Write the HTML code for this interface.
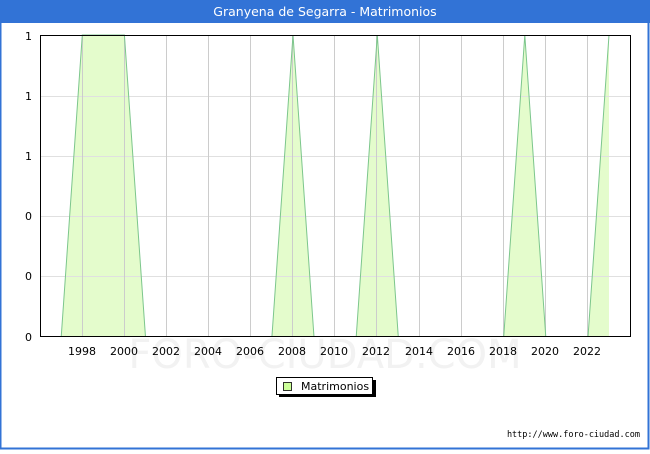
<!DOCTYPE html>
<html><head><meta charset="utf-8"><style>
body{margin:0;width:650px;height:450px;overflow:hidden;background:#fff;font-family:"DejaVu Sans","Liberation Sans",sans-serif;}
</style></head><body>
<svg width="650" height="450" xmlns="http://www.w3.org/2000/svg" font-family="DejaVu Sans, Liberation Sans, sans-serif">
<rect x="0.5" y="0.5" width="648" height="448" fill="#fff" stroke="#3273d6" stroke-width="2"/>
<rect x="0" y="0" width="650" height="23" fill="#3273d6"/>
<text x="325" y="16" text-anchor="middle" fill="#fff" font-size="12.5">Granyena de Segarra - Matrimonios</text>
<text x="325" y="368" text-anchor="middle" fill="#f2f2f2" font-size="40">FORO-CIUDAD.COM</text>
<path d="M61.2 337 L82.3 35 L124.4 35 L145.5 337 L271.9 337 L293 35 L314 337 L356.2 337 L377.3 35 L398.3 337 L503.7 337 L524.8 35 L545.8 337 L588 337 L609 35 L609 337 Z" fill="#e4fccc" stroke="none"/>
<g stroke="#e0e0e0" stroke-width="1">
<line x1="40" y1="96.5" x2="630" y2="96.5"/><line x1="40" y1="156.5" x2="630" y2="156.5"/><line x1="40" y1="216.5" x2="630" y2="216.5"/><line x1="40" y1="276.5" x2="630" y2="276.5"/>
</g>
<g stroke="#cccccc" stroke-width="1">
<line x1="82.5" y1="35" x2="82.5" y2="337"/><line x1="124.5" y1="35" x2="124.5" y2="337"/><line x1="166.5" y1="35" x2="166.5" y2="337"/><line x1="208.5" y1="35" x2="208.5" y2="337"/><line x1="250.5" y1="35" x2="250.5" y2="337"/><line x1="292.5" y1="35" x2="292.5" y2="337"/><line x1="334.5" y1="35" x2="334.5" y2="337"/><line x1="376.5" y1="35" x2="376.5" y2="337"/><line x1="419.5" y1="35" x2="419.5" y2="337"/><line x1="461.5" y1="35" x2="461.5" y2="337"/><line x1="503.5" y1="35" x2="503.5" y2="337"/><line x1="545.5" y1="35" x2="545.5" y2="337"/><line x1="587.5" y1="35" x2="587.5" y2="337"/>
</g>
<path d="M61.2 337 L82.3 35 L124.4 35 L145.5 337 M271.9 337 L293 35 L314 337 M356.2 337 L377.3 35 L398.3 337 M503.7 337 L524.8 35 L545.8 337 M588 337 L609 35" fill="none" stroke="#7cc68c" stroke-width="1"/>
<rect x="40.5" y="35.5" width="590" height="301" fill="none" stroke="#000" stroke-width="1"/>
<g font-size="11" fill="#000" text-anchor="end">
<text x="32" y="40">1</text><text x="32" y="100">1</text><text x="32" y="160">1</text><text x="32" y="220">0</text><text x="32" y="280">0</text><text x="32" y="341">0</text>
</g>
<g font-size="11" fill="#000" text-anchor="middle">
<text x="82" y="355">1998</text><text x="124" y="355">2000</text><text x="166" y="355">2002</text><text x="208" y="355">2004</text><text x="250" y="355">2006</text><text x="292" y="355">2008</text><text x="334" y="355">2010</text><text x="376" y="355">2012</text><text x="419" y="355">2014</text><text x="461" y="355">2016</text><text x="503" y="355">2018</text><text x="545" y="355">2020</text><text x="587" y="355">2022</text>
</g>
<rect x="279" y="380" width="97" height="17" fill="#000"/>
<rect x="276.5" y="377.5" width="96" height="17" fill="#fff" stroke="#000"/>
<rect x="283.5" y="382.5" width="8" height="8" fill="#ccff99" stroke="#000" stroke-width="0.8"/>
<text x="301" y="390" font-size="11" fill="#000">Matrimonios</text>
<text x="640" y="437" text-anchor="end" font-size="8.5" fill="#000" font-family="DejaVu Sans Mono, Liberation Mono, monospace">http://www.foro-ciudad.com</text>
</svg>
</body></html>
